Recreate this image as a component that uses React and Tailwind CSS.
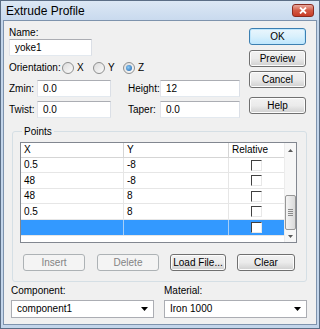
import React from "react";

const Input = ({ value, w }) => (
  <div className={`h-[17px] bg-white border border-[#abadb3] border-b-[#e3e9ef] border-r-[#dbdfe6] border-l-[#e2e3ea] flex items-center pl-[5px] ${w}`}>
    <span className="leading-none">{value}</span>
  </div>
);

const Btn = ({ children, w, def, disabled }) => (
  <div
    className={`h-[17px] ${w} rounded-[3px] flex items-center justify-center border whitespace-nowrap ${
      disabled
        ? "border-[#adb2b5] bg-[#f4f4f4] text-[#838383]"
        : def
        ? "border-[#3c7fb1] bg-gradient-to-b from-[#eaf6fd] via-[#d9f0fc] to-[#bee6fd] shadow-[inset_0_0_0_1px_#bfe7fd]"
        : "border-[#707070] bg-gradient-to-b from-[#f2f2f2] via-[#ebebeb] to-[#cfcfcf] shadow-[inset_0_0_0_1px_#fcfcfc]"
    }`}
  >
    <span className="leading-none">{children}</span>
  </div>
);

const Radio = ({ label, checked }) => (
  <div className="flex items-center gap-[3px]">
    <div className="w-[12px] h-[12px] rounded-full border border-[#8e8f8f] bg-gradient-to-br from-[#dcdcdc] to-[#fbfbfb] flex items-center justify-center">
      {checked && (
        <div className="w-[6px] h-[6px] rounded-full bg-[radial-gradient(circle_at_40%_40%,#8ccbf5,#1b5faa)]" />
      )}
    </div>
    <span className="leading-none">{label}</span>
  </div>
);

const Check = () => (
  <div className="w-[11px] h-[11px] bg-white border border-t-[#404040] border-l-[#404040] border-b-[#e8e8e8] border-r-[#e8e8e8]" />
);

const rows = [
  { x: "0.5", y: "-8", h: "h-[15px]" },
  { x: "48", y: "-8", h: "h-[16px]" },
  { x: "48", y: "8", h: "h-[15px]" },
  { x: "0.5", y: "8", h: "h-[16px]" },
];

const Combo = ({ value }) => (
  <div className="h-[18px] w-[143px] bg-white border border-[#abadb3] flex items-center justify-between pl-[5px] pr-[5px]">
    <span className="leading-none">{value}</span>
    <svg width="7" height="4" viewBox="0 0 7 4">
      <path d="M0 0h7L3.5 4z" fill="#000" />
    </svg>
  </div>
);

export default function App() {
  return (
    <div className="w-[320px] h-[329px] bg-[#c3d5ea] border border-[#5b6e86] flex flex-col text-[10px] text-black font-['Liberation_Sans',Arial,sans-serif] overflow-hidden">
      {/* title bar */}
      <div className="h-[19px] flex items-center justify-between bg-gradient-to-b from-[#dce8f5] to-[#c9daee] pl-[5px] pr-[5px]">
        <span className="text-[12px] leading-none">Extrude Profile</span>
        <div className="w-[22px] h-[13px] rounded-[3px] border border-[#8a2b20] bg-gradient-to-b from-[#e8a99e] via-[#d25a45] to-[#c83c26] flex items-center justify-center">
          <svg width="8" height="7" viewBox="0 0 8 7">
            <path d="M1 0.5L7 6.5M7 0.5L1 6.5" stroke="#fff" strokeWidth="1.8" />
          </svg>
        </div>
      </div>
      {/* body */}
      <div className="flex-1 mx-[2px] mb-[3px] border border-[#7e93ad] bg-[#f0f0f0] flex flex-col">
        <div className="flex">
          <div className="w-[242px] pl-[5px] flex flex-col">
            <div className="mt-[6px] h-[12px] leading-[12px]">Name:</div>
            <Input value="yoke1" w="w-[83px]" />
            <div className="mt-[5px] h-[14px] flex items-center">
              <span className="w-[53px] leading-none">Orientation:</span>
              <div className="w-[31px]"><Radio label="X" /></div>
              <div className="w-[30px]"><Radio label="Y" /></div>
              <Radio label="Z" checked />
            </div>
            <div className="mt-[5px] flex items-center">
              <span className="w-[28px] leading-none">Zmin:</span>
              <Input value="0.0" w="w-[74px]" />
              <span className="ml-[17px] w-[32px] leading-none">Height:</span>
              <Input value="12" w="w-[80px]" />
            </div>
            <div className="mt-[4px] flex items-center">
              <span className="w-[28px] leading-none">Twist:</span>
              <Input value="0.0" w="w-[74px]" />
              <span className="ml-[17px] w-[32px] leading-none">Taper:</span>
              <Input value="0.0" w="w-[80px]" />
            </div>
          </div>
          <div className="flex flex-col pt-[7px] pl-[3px]">
            <Btn w="w-[57px]" def>OK</Btn>
            <div className="mt-[5px]"><Btn w="w-[57px]">Preview</Btn></div>
            <div className="mt-[4px]"><Btn w="w-[57px]">Cancel</Btn></div>
            <div className="mt-[9px]"><Btn w="w-[57px]">Help</Btn></div>
          </div>
        </div>

        {/* Points group */}
        <fieldset className="mt-[7px] ml-[8px] w-[295px] border border-[#d5dfe5] rounded-[3px] pl-[7px] pb-[10px]">
          <legend className="ml-[2px] px-[2px] leading-[13px]">Points</legend>
          <div className="mt-[4px] w-[277px] h-[101px] border border-[#828790] bg-white flex">
            <div className="w-[263px] flex flex-col">
              <div className="h-[15px] flex border-b border-[#d5d5d5]">
                <div className="w-[103px] border-r border-[#d5d5d5] pl-[3px] flex items-center leading-none">X</div>
                <div className="w-[105px] border-r border-[#d5d5d5] pl-[3px] flex items-center leading-none">Y</div>
                <div className="flex-1 pl-[3px] flex items-center leading-none">Relative</div>
              </div>
              {rows.map((r, i) => (
                <div key={i} className={`${r.h} flex border-b border-[#e6e6e6]`}>
                  <div className="w-[103px] border-r border-[#e6e6e6] pl-[3px] flex items-center leading-none">{r.x}</div>
                  <div className="w-[105px] border-r border-[#e6e6e6] pl-[3px] flex items-center leading-none">{r.y}</div>
                  <div className="flex-1 flex items-center justify-center"><Check /></div>
                </div>
              ))}
              <div className="h-[16px] flex bg-[#3399ff] border-b border-[#e6e6e6]">
                <div className="w-[103px] border-r border-[#a8cff7]" />
                <div className="w-[105px] border-r border-[#a8cff7]" />
                <div className="flex-1 flex items-center justify-center"><Check /></div>
              </div>
            </div>
            <div className="flex-1 bg-[#f7f7f7] border-l border-[#ececec] flex flex-col items-center">
              <div className="h-[15px] flex items-center">
                <svg width="5" height="3" viewBox="0 0 5 3"><path d="M0 3h5L2.5 0z" fill="#5a5a5a" /></svg>
              </div>
              <div className="flex-1" />
              <div className="w-[11px] h-[35px] rounded-[2px] border border-[#979797] bg-gradient-to-r from-[#f4f4f4] to-[#dadada] flex flex-col items-center justify-center gap-[1px]">
                <div className="w-[5px] h-[1px] bg-[#8a8a8a]" />
                <div className="w-[5px] h-[1px] bg-[#8a8a8a]" />
                <div className="w-[5px] h-[1px] bg-[#8a8a8a]" />
                <div className="w-[5px] h-[1px] bg-[#8a8a8a]" />
              </div>
              <div className="h-[12px] flex items-center">
                <svg width="5" height="3" viewBox="0 0 5 3"><path d="M0 0h5L2.5 3z" fill="#5a5a5a" /></svg>
              </div>
            </div>
          </div>
          <div className="mt-[11px] flex">
            <div className="ml-[3px]"><Btn w="w-[62px]" disabled>Insert</Btn></div>
            <div className="ml-[12px]"><Btn w="w-[62px]" disabled>Delete</Btn></div>
            <div className="ml-[11px]"><Btn w="w-[56px]">Load File...</Btn></div>
            <div className="ml-[11px]"><Btn w="w-[58px]">Clear</Btn></div>
          </div>
        </fieldset>

        <div className="mt-[3px] flex pl-[7px]">
          <div className="w-[153px] flex flex-col">
            <div className="h-[12px] leading-[12px]">Component:</div>
            <div className="mt-[3px]"><Combo value="component1" /></div>
          </div>
          <div className="flex flex-col">
            <div className="h-[12px] leading-[12px]">Material:</div>
            <div className="mt-[3px]"><Combo value="Iron 1000" /></div>
          </div>
        </div>
      </div>
    </div>
  );
}
